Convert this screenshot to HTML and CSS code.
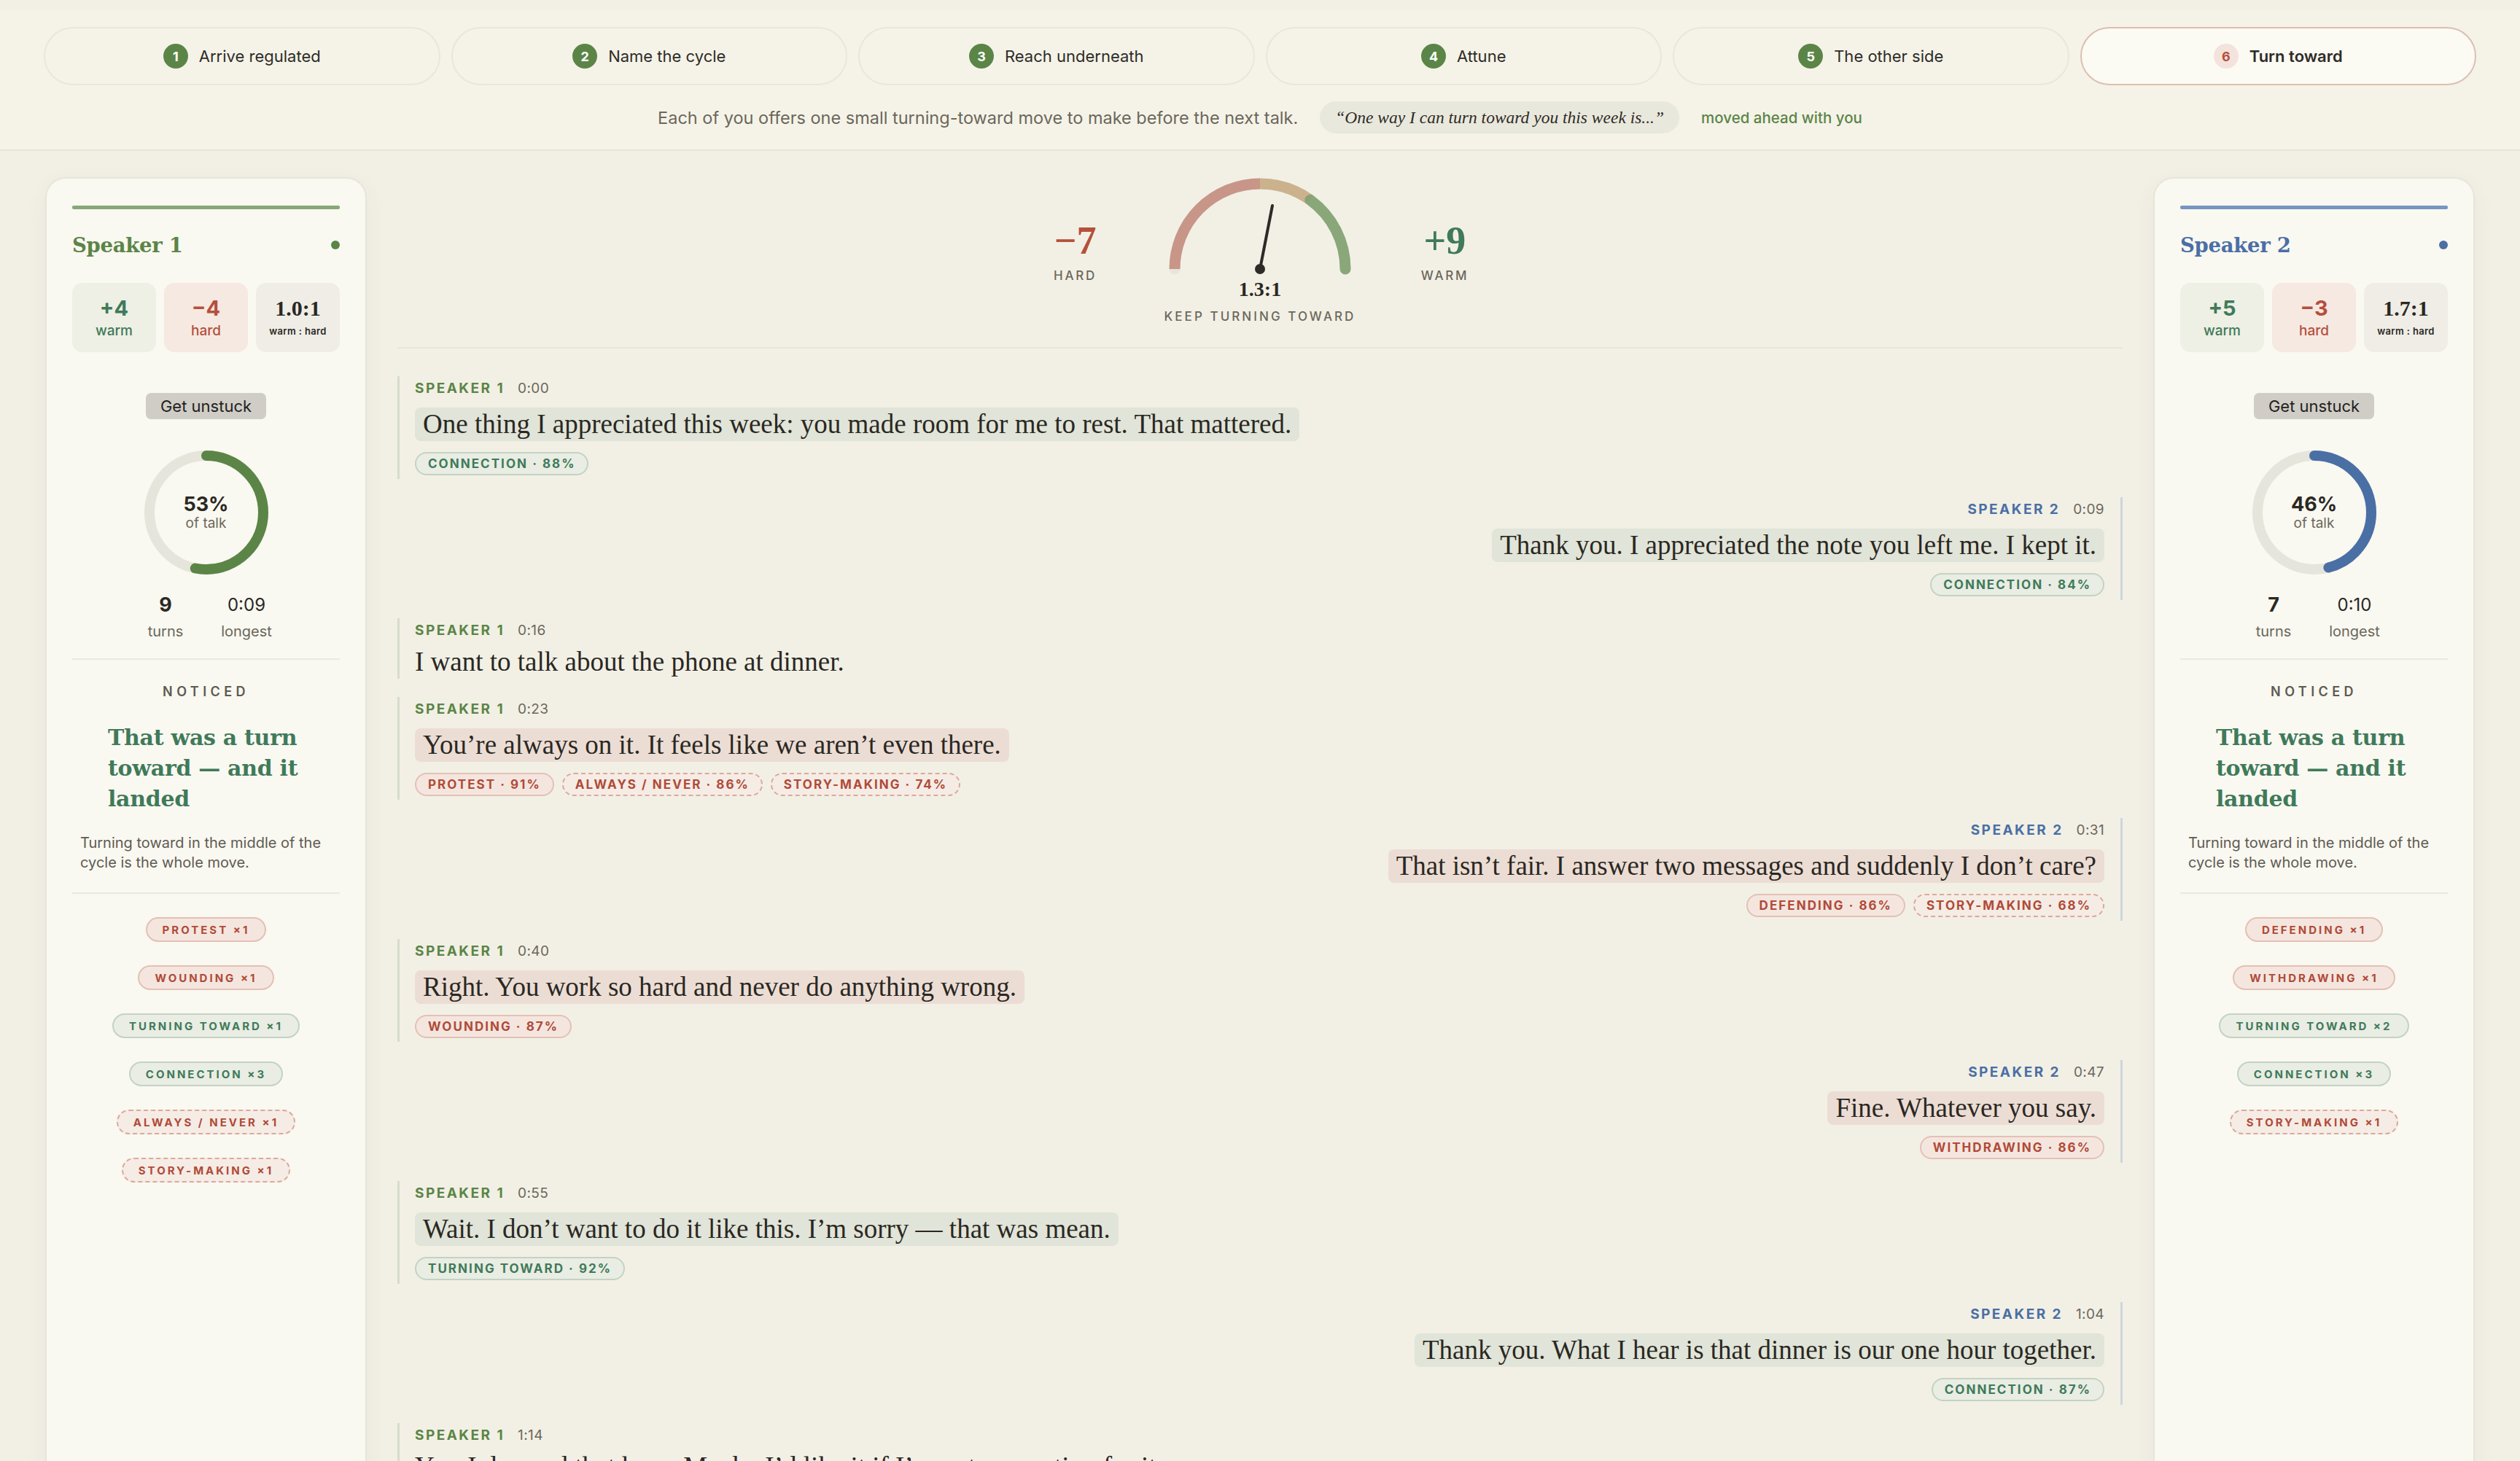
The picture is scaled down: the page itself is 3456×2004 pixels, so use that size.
FILE: index.html
```html
<!DOCTYPE html>
<html lang="en">
<head>
    <meta charset="UTF-8">
    <meta name="viewport" content="width=device-width, initial-scale=1.0">
    <title>Turn toward</title>
    <link rel="stylesheet" href="styles.css">
</head>
<body>
    <header class="top">
        <nav class="steps">
            <div class="step"><span class="step-num">1</span>Arrive regulated</div>
            <div class="step"><span class="step-num">2</span>Name the cycle</div>
            <div class="step"><span class="step-num">3</span>Reach underneath</div>
            <div class="step"><span class="step-num">4</span>Attune</div>
            <div class="step"><span class="step-num">5</span>The other side</div>
            <div class="step active"><span class="step-num">6</span>Turn toward</div>
        </nav>
        <div class="prompt-row">
            <p class="prompt-text">Each of you offers one small turning-toward move to make before the next talk.</p>
            <span class="prompt-quote">“One way I can turn toward you this week is...”</span>
            <span class="prompt-note">moved ahead with you</span>
        </div>
    </header>

    <main class="session">
        <!-- speaker 1 -->
        <aside class="speaker-card s1">
            <div class="card-bar"></div>
            <div class="card-name">
                <h2>Speaker 1</h2>
                <span class="dot"></span>
            </div>
            <div class="tally">
                <div class="tally-box warm"><b>+4</b><span>warm</span></div>
                <div class="tally-box hard"><b>−4</b><span>hard</span></div>
                <div class="tally-box ratio"><b>1.0:1</b><span>warm : hard</span></div>
            </div>
            <div class="unstuck-wrap"><button class="unstuck">Get unstuck</button></div>
            <div class="donut">
                <svg width="172" height="172" viewBox="0 0 172 172">
                    <circle cx="86" cy="86" r="78" class="donut-track"/>
                    <circle cx="86" cy="86" r="78" class="donut-fill" stroke-dasharray="260 490" transform="rotate(-90 86 86)"/>
                </svg>
                <div class="donut-label"><b>53%</b><span>of talk</span></div>
            </div>
            <div class="talk-stats">
                <div><b>9</b><span>turns</span></div>
                <div><em>0:09</em><span>longest</span></div>
            </div>
            <div class="noticed">
                <div class="noticed-title">NOTICED</div>
                <h3>That was a turn toward — and it landed</h3>
                <p>Turning toward in the middle of the cycle is the whole move.</p>
            </div>
            <div class="card-tags">
                <span class="chip hard">PROTEST ×1</span>
                <span class="chip hard">WOUNDING ×1</span>
                <span class="chip warm">TURNING TOWARD ×1</span>
                <span class="chip warm">CONNECTION ×3</span>
                <span class="chip soft">ALWAYS / NEVER ×1</span>
                <span class="chip soft">STORY-MAKING ×1</span>
            </div>
        </aside>

        <section class="talk">
            <div class="balance">
                <div class="balance-side hard">
                    <b>−7</b>
                    <span>HARD</span>
                </div>
                <div class="balance-gauge">
                    <svg width="260" height="136" viewBox="0 0 260 136">
                        <path d="M13 126 A117 117 0 0 1 247 126" class="arc-track"/>
                        <path d="M13 126 A117 117 0 0 1 130 9" stroke="#c68f80" class="arc"/>
                        <path d="M130 9 A117 117 0 0 1 198.8 31.3" stroke="#c9ae85" class="arc"/>
                        <path d="M198.8 31.3 A117 117 0 0 1 247 126" stroke="#82a271" class="arc round"/>
                        <line x1="130" y1="126" x2="147" y2="39" class="needle"/>
                        <circle cx="130" cy="126" r="7" fill="#2d2b27"/>
                    </svg>
                    <div class="ratio-value">1.3:1</div>
                    <div class="ratio-label">KEEP TURNING TOWARD</div>
                </div>
                <div class="balance-side warm">
                    <b>+9</b>
                    <span>WARM</span>
                </div>
            </div>

            <div class="transcript">
                <div class="turn s1">
                    <div class="who">SPEAKER 1 <time>0:00</time></div>
                    <div class="said warm">One thing I appreciated this week: you made room for me to rest. That mattered.</div>
                    <div class="tags"><span class="tag warm">CONNECTION · 88%</span></div>
                </div>
                <div class="turn s2">
                    <div class="who">SPEAKER 2 <time>0:09</time></div>
                    <div class="said warm">Thank you. I appreciated the note you left me. I kept it.</div>
                    <div class="tags"><span class="tag warm">CONNECTION · 84%</span></div>
                </div>
                <div class="turn s1">
                    <div class="who">SPEAKER 1 <time>0:16</time></div>
                    <div class="said plain">I want to talk about the phone at dinner.</div>
                </div>
                <div class="turn s1">
                    <div class="who">SPEAKER 1 <time>0:23</time></div>
                    <div class="said hard">You’re always on it. It feels like we aren’t even there.</div>
                    <div class="tags">
                        <span class="tag hard">PROTEST · 91%</span>
                        <span class="tag soft">ALWAYS / NEVER · 86%</span>
                        <span class="tag soft">STORY-MAKING · 74%</span>
                    </div>
                </div>
                <div class="turn s2">
                    <div class="who">SPEAKER 2 <time>0:31</time></div>
                    <div class="said hard">That isn’t fair. I answer two messages and suddenly I don’t care?</div>
                    <div class="tags">
                        <span class="tag hard">DEFENDING · 86%</span>
                        <span class="tag soft">STORY-MAKING · 68%</span>
                    </div>
                </div>
                <div class="turn s1">
                    <div class="who">SPEAKER 1 <time>0:40</time></div>
                    <div class="said hard">Right. You work so hard and never do anything wrong.</div>
                    <div class="tags"><span class="tag hard">WOUNDING · 87%</span></div>
                </div>
                <div class="turn s2">
                    <div class="who">SPEAKER 2 <time>0:47</time></div>
                    <div class="said hard">Fine. Whatever you say.</div>
                    <div class="tags"><span class="tag hard">WITHDRAWING · 86%</span></div>
                </div>
                <div class="turn s1">
                    <div class="who">SPEAKER 1 <time>0:55</time></div>
                    <div class="said warm">Wait. I don’t want to do it like this. I’m sorry — that was mean.</div>
                    <div class="tags"><span class="tag warm">TURNING TOWARD · 92%</span></div>
                </div>
                <div class="turn s2">
                    <div class="who">SPEAKER 2 <time>1:04</time></div>
                    <div class="said warm">Thank you. What I hear is that dinner is our one hour together.</div>
                    <div class="tags"><span class="tag warm">CONNECTION · 87%</span></div>
                </div>
                <div class="turn s1">
                    <div class="who">SPEAKER 1 <time>1:14</time></div>
                    <div class="said plain">Yes. I do need that hour. Maybe I’d like it if I’m not competing for it.</div>
                </div>
            </div>
        </section>

        <!-- speaker 2 -->
        <aside class="speaker-card s2">
            <div class="card-bar"></div>
            <div class="card-name">
                <h2>Speaker 2</h2>
                <span class="dot"></span>
            </div>
            <div class="tally">
                <div class="tally-box warm"><b>+5</b><span>warm</span></div>
                <div class="tally-box hard"><b>−3</b><span>hard</span></div>
                <div class="tally-box ratio"><b>1.7:1</b><span>warm : hard</span></div>
            </div>
            <div class="unstuck-wrap"><button class="unstuck">Get unstuck</button></div>
            <div class="donut">
                <svg width="172" height="172" viewBox="0 0 172 172">
                    <circle cx="86" cy="86" r="78" class="donut-track"/>
                    <circle cx="86" cy="86" r="78" class="donut-fill" stroke-dasharray="225 490" transform="rotate(-90 86 86)"/>
                </svg>
                <div class="donut-label"><b>46%</b><span>of talk</span></div>
            </div>
            <div class="talk-stats">
                <div><b>7</b><span>turns</span></div>
                <div><em>0:10</em><span>longest</span></div>
            </div>
            <div class="noticed">
                <div class="noticed-title">NOTICED</div>
                <h3>That was a turn toward — and it landed</h3>
                <p>Turning toward in the middle of the cycle is the whole move.</p>
            </div>
            <div class="card-tags">
                <span class="chip hard">DEFENDING ×1</span>
                <span class="chip hard">WITHDRAWING ×1</span>
                <span class="chip warm">TURNING TOWARD ×2</span>
                <span class="chip warm">CONNECTION ×3</span>
                <span class="chip soft">STORY-MAKING ×1</span>
            </div>
        </aside>
    </main>
</body>
</html>
```

FILE: styles.css
```css
body {
    margin: 0;
    padding-top: 14px;
    background-color: #f2f0e5;
    font-family: Inter, "Liberation Sans", sans-serif;
    color: #2a2823;
}

/* ---- top bar with the six steps ---- */
.top {
    background-color: #f5f3e8;
    border-bottom: 2px solid #e7e4d9;
    padding: 23px 60px 22px;
}

.steps {
    display: grid;
    grid-template-columns: repeat(6, 1fr);
    gap: 15px;
}

.step {
    height: 80px;
    box-sizing: border-box;
    border: 2px solid #e9e6db;
    border-radius: 40px;
    display: flex;
    align-items: center;
    justify-content: center;
    gap: 15px;
    font-size: 22px;
    color: #2e2c27;
}

.step-num {
    width: 34px;
    height: 34px;
    border-radius: 50%;
    background-color: #5b8547;
    color: #fff;
    font-size: 18px;
    font-weight: 700;
    display: flex;
    align-items: center;
    justify-content: center;
}

.step.active {
    background-color: #fbfaf3;
    border-color: #dcbfb2;
    font-weight: 600;
}

.step.active .step-num {
    background-color: #f3e3dc;
    color: #b5503c;
}

.prompt-row {
    display: flex;
    justify-content: center;
    align-items: center;
    gap: 30px;
    margin-top: 22px;
}

.prompt-text {
    margin: 0;
    font-size: 23.5px;
    color: #6b675b;
}

.prompt-quote {
    height: 44px;
    padding: 0 21px;
    border-radius: 22px;
    background-color: #e9e8dc;
    display: flex;
    align-items: center;
    font-family: "Liberation Serif", serif;
    font-style: italic;
    font-size: 23.5px;
    color: #2e2c27;
}

.prompt-note {
    font-size: 20.5px;
    font-weight: 500;
    color: #5b8547;
}

/* ---- three column session ---- */
.session {
    display: grid;
    grid-template-columns: 441px 1fr 441px;
    column-gap: 42px;
    padding: 36px 62px 0;
}

.speaker-card {
    background-color: #f9f8f1;
    border: 2px solid #e8e5da;
    border-radius: 28px;
    padding: 37px 35px 40px;
    box-shadow: 0 8px 30px rgba(80, 70, 40, 0.05);
}

.card-bar {
    height: 5px;
    border-radius: 2px;
    background-color: #87a877;
}

.s2 .card-bar {
    background-color: #7696c0;
}

.card-name {
    display: flex;
    justify-content: space-between;
    align-items: center;
    margin-top: 33px;
}

.card-name h2 {
    margin: 0;
    font-family: "DejaVu Serif", serif;
    font-size: 27.5px;
    line-height: 32px;
    font-weight: 700;
    color: #5b8547;
    letter-spacing: -0.01em;
}

.s2 .card-name h2 {
    color: #4a6fa5;
}

.dot {
    width: 12px;
    height: 12px;
    border-radius: 50%;
    background-color: #5b8547;
}

.s2 .dot {
    background-color: #4a6fa5;
}

.tally {
    display: grid;
    grid-template-columns: repeat(3, 1fr);
    gap: 11px;
    margin-top: 36px;
}

.tally-box {
    height: 95px;
    box-sizing: border-box;
    border-radius: 14px;
    display: flex;
    flex-direction: column;
    align-items: center;
    justify-content: center;
    gap: 4px;
}

.tally-box b {
    font-size: 29px;
    line-height: 32px;
}

.tally-box span {
    font-size: 19px;
    line-height: 22px;
    font-weight: 500;
}

.tally-box.warm {
    background-color: #eeefe5;
    color: #3f7a5a;
}

.tally-box.hard {
    background-color: #f5e9e2;
    color: #b5503c;
}

.tally-box.ratio {
    background-color: #efede6;
    color: #2a2823;
}

.tally-box.ratio b {
    font-family: "Liberation Serif", serif;
    font-size: 30px;
}

.tally-box.ratio span {
    font-size: 13px;
    font-weight: 600;
    letter-spacing: 0.03em;
}

.unstuck-wrap {
    display: flex;
    justify-content: center;
    margin-top: 56px;
}

.unstuck {
    height: 36px;
    padding: 0 20px;
    border: none;
    border-radius: 7px;
    background-color: #cfcdc6;
    font-family: inherit;
    font-size: 22px;
    color: #232220;
}

.donut {
    display: grid;
    justify-content: center;
    align-items: center;
    margin-top: 42px;
}

.donut svg,
.donut-label {
    grid-area: 1 / 1;
}

.donut-track {
    fill: none;
    stroke: #e6e5dc;
    stroke-width: 14;
}

.donut-fill {
    fill: none;
    stroke: #5b8547;
    stroke-width: 14;
    stroke-linecap: round;
}

.s2 .donut-fill {
    stroke: #4a6fa5;
}

.donut-label {
    display: flex;
    flex-direction: column;
    align-items: center;
}

.donut-label b {
    font-size: 27px;
    line-height: 30px;
}

.donut-label span {
    font-size: 19px;
    line-height: 22px;
    color: #6b675b;
}

.talk-stats {
    display: flex;
    justify-content: center;
    margin-top: 26px;
}

.talk-stats div {
    width: 111px;
    display: flex;
    flex-direction: column;
    align-items: center;
}

.talk-stats b,
.talk-stats em {
    font-size: 27px;
    line-height: 30px;
    font-style: normal;
}

.talk-stats em {
    font-size: 24px;
}

.talk-stats span {
    margin-top: 9px;
    font-size: 20px;
    line-height: 24px;
    color: #6b675b;
}

.noticed {
    margin-top: 25px;
    padding: 34px 0 27px;
    border-top: 2px solid #ebe8df;
    border-bottom: 2px solid #ebe8df;
}

.noticed-title {
    text-align: center;
    font-size: 18px;
    line-height: 20px;
    font-weight: 600;
    letter-spacing: 0.3em;
    color: #5d5a50;
}

.noticed h3 {
    margin: 32px 0 0;
    padding: 0 30px 0 49px;
    font-family: "DejaVu Serif", serif;
    font-size: 30px;
    line-height: 42px;
    font-weight: 700;
    color: #3f7a5a;
    letter-spacing: -0.01em;
}

.noticed p {
    margin: 26px 0 0;
    padding: 0 8px 0 11px;
    font-size: 20px;
    line-height: 27px;
    color: #5f5b51;
}

.card-tags {
    display: flex;
    flex-direction: column;
    align-items: center;
    gap: 32px;
    margin-top: 32px;
}

.chip {
    height: 34px;
    box-sizing: border-box;
    padding: 0 21px;
    border-radius: 17px;
    display: inline-flex;
    align-items: center;
    font-size: 15px;
    font-weight: 700;
    letter-spacing: 0.2em;
}

/* shared colours for chips and tags */
.chip.hard, .tag.hard {
    background-color: #f4e6df;
    border: 2px solid #e4c0b4;
    color: #b04a38;
}

.chip.warm, .tag.warm {
    background-color: #e9ede3;
    border: 2px solid #c3d3c3;
    color: #3f7a5a;
}

.chip.soft, .tag.soft {
    background-color: #f5ece5;
    border: 2px dashed #dba99b;
    color: #b04a38;
}

/* ---- centre: balance gauge and transcript ---- */
.talk {
    min-width: 0;
}

.balance {
    display: flex;
    justify-content: center;
    align-items: flex-start;
    gap: 82px;
    padding-bottom: 32px;
    border-bottom: 2px solid #e8e5da;
}

.balance-side {
    width: 80px;
    margin-top: 59px;
    display: flex;
    flex-direction: column;
    align-items: center;
}

.balance-side b {
    font-family: "Liberation Serif", serif;
    font-size: 54px;
    line-height: 56px;
}

.balance-side span {
    margin-top: 10px;
    font-size: 17px;
    line-height: 20px;
    font-weight: 500;
    letter-spacing: 0.16em;
    color: #6b675b;
}

.balance-side.hard b {
    color: #b5503c;
}

.balance-side.warm b {
    color: #3f7a5a;
}

.balance-gauge {
    display: flex;
    flex-direction: column;
    align-items: center;
}

.arc-track {
    fill: none;
    stroke: #e7e5dc;
    stroke-width: 15;
    stroke-linecap: round;
}

.arc {
    fill: none;
    stroke-width: 15;
    opacity: 0.92;
}

.arc.round {
    stroke-linecap: round;
}

.needle {
    stroke: #2d2b27;
    stroke-width: 4;
    stroke-linecap: round;
}

.ratio-value {
    margin-top: 3px;
    font-family: "Liberation Serif", serif;
    font-size: 28px;
    line-height: 30px;
    font-weight: 700;
}

.ratio-label {
    margin-top: 12px;
    font-size: 17px;
    line-height: 20px;
    font-weight: 500;
    letter-spacing: 0.18em;
    color: #6b675b;
}

.transcript {
    margin-top: 38px;
}

.turn {
    display: flex;
    flex-direction: column;
    align-items: flex-start;
    padding: 6px 0 5px 21px;
    border-left: 3px solid #d6ddca;
    margin-bottom: 25px;
}

.turn.s2 {
    align-items: flex-end;
    padding: 6px 22px 5px 0;
    border-left: none;
    border-right: 3px solid #cdd5df;
}

.who {
    font-size: 19px;
    line-height: 22px;
    font-weight: 700;
    letter-spacing: 0.13em;
    color: #5b8547;
}

.s2 .who {
    color: #4a6fa5;
}

.who time {
    margin-left: 11px;
    font-weight: 400;
    letter-spacing: 0.02em;
    color: #6b675b;
}

.said {
    margin-top: 15px;
    padding: 5px 11px;
    border-radius: 8px;
    font-family: "Liberation Serif", serif;
    font-size: 37px;
    line-height: 36px;
    color: #2a2823;
}

.said.warm {
    background-color: #e1e4d8;
}

.said.hard {
    background-color: #ecddd4;
}

.said.plain {
    margin-top: 14px;
    padding: 0;
}

.tags {
    display: flex;
    gap: 11px;
    margin-top: 15px;
}

.tag {
    height: 32px;
    box-sizing: border-box;
    padding: 0 16px;
    border-radius: 16px;
    display: inline-flex;
    align-items: center;
    font-size: 17px;
    font-weight: 700;
    letter-spacing: 0.12em;
}
```
